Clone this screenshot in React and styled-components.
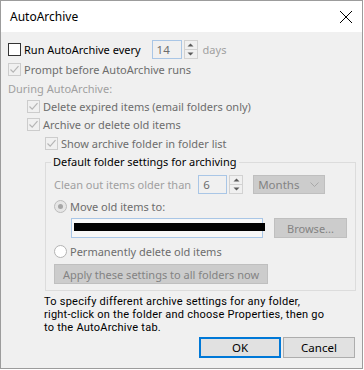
import React from "react";
import styled, { createGlobalStyle } from "styled-components";

const GlobalStyle = createGlobalStyle`
  html, body {
    margin: 0;
    padding: 0;
    background: #ffffff;
  }
  body {
    font-family: "Noto Sans", "Open Sans", sans-serif;
    font-size: 11px;
    color: #000;
  }
`;

const Dialog = styled.div`
  width: 363px;
  height: 369px;
  box-sizing: border-box;
  border: 1px solid #9c9c9c;
  background: #f0f0f0;
  display: flex;
  flex-direction: column;
`;

const TitleBar = styled.div`
  height: 31px;
  flex-shrink: 0;
  background: #fff;
  display: flex;
  align-items: center;
  justify-content: space-between;
  padding: 0 8px 0 9px;
  font-size: 12px;
`;

const CloseIcon = styled.svg`
  width: 14px;
  height: 14px;
  margin-right: 1px;
`;

const Body = styled.div`
  flex: 1;
  padding: 7px 0 0 7px;
  display: flex;
  flex-direction: column;
`;

const Row = styled.div`
  display: flex;
  align-items: center;
  height: ${p => p.h || 19}px;
  padding-left: ${p => p.indent || 0}px;
  margin-top: ${p => p.mt || 0}px;
  white-space: nowrap;
`;

const Label = styled.span`
  color: ${p => (p.tone === "dark" ? "#000" : p.tone === "light" ? "#a0a0a0" : "#6d6d6d")};
  margin-left: ${p => p.ml || 0}px;
`;

const Box = styled.span`
  width: 13px;
  height: 13px;
  box-sizing: border-box;
  border: 1px solid ${p => (p.disabled ? "#cccccc" : "#333333")};
  background: ${p => (p.disabled ? "#f0f0f0" : "#ffffff")};
  display: inline-flex;
  align-items: center;
  justify-content: center;
  flex-shrink: 0;
`;

const Radio = styled.span`
  width: 13px;
  height: 13px;
  box-sizing: border-box;
  border-radius: 50%;
  border: 1px solid ${p => (p.checked ? "#bcbcbc" : "#b3b3b3")};
  background: ${p => (p.checked ? "#e6e6e6" : "#ffffff")};
  display: inline-flex;
  align-items: center;
  justify-content: center;
  flex-shrink: 0;
  &::after {
    content: "";
    display: ${p => (p.checked ? "block" : "none")};
    width: 5px;
    height: 5px;
    border-radius: 50%;
    background: #a6a6a6;
  }
`;

const NumField = styled.span`
  width: ${p => p.w}px;
  height: 19px;
  box-sizing: border-box;
  border: 1px solid #a9c6e6;
  background: #f0f0f0;
  color: #6d6d6d;
  display: inline-flex;
  align-items: center;
  padding-left: 4px;
  font-size: 11.5px;
  margin-left: ${p => p.ml || 0}px;
`;

const Spinner = styled.span`
  width: 14px;
  height: 19px;
  box-sizing: border-box;
  border: 1px solid #d2d2d2;
  margin-left: 2px;
  display: inline-flex;
  flex-direction: column;
  & > span {
    flex: 1;
    display: flex;
    align-items: center;
    justify-content: center;
  }
  & > span + span {
    border-top: 1px solid #d2d2d2;
  }
`;

const Select = styled.span`
  width: 72px;
  height: 19px;
  box-sizing: border-box;
  border: 1px solid #bfbfbf;
  background: #cccccc;
  color: #838383;
  display: inline-flex;
  align-items: center;
  justify-content: space-between;
  padding: 0 5px 0 4px;
  font-size: 11.5px;
  margin-left: 10px;
`;

const PathField = styled.span`
  position: relative;
  width: 192px;
  height: 20px;
  box-sizing: border-box;
  border: 1px solid #a9c6e6;
  background: #f7f7f7;
  margin-left: 17px;
`;

const Redaction = styled.span`
  position: absolute;
  left: 2px;
  right: -3px;
  top: 4px;
  height: 8px;
  background: #000;
`;

const GrayButton = styled.span`
  width: ${p => p.w}px;
  height: 20px;
  box-sizing: border-box;
  border: 1px solid #bfbfbf;
  background: #cccccc;
  color: #838383;
  display: inline-flex;
  align-items: center;
  justify-content: center;
  margin-left: ${p => p.ml || 0}px;
`;

const Group = styled.fieldset`
  margin: 1px 0 0 37px;
  width: 311px;
  box-sizing: border-box;
  border: 1px solid #dcdcdc;
  padding: 1px 0 6px 8px;
  min-width: 0;
`;

const Legend = styled.legend`
  padding: 0 2px;
  margin-left: -3px;
  line-height: 16px;
  color: #000;
`;

const Note = styled.p`
  margin: 4px 0 0 36px;
  font-family: Roboto, "Noto Sans", sans-serif;
  font-size: 11px;
  letter-spacing: 0.24px;
  line-height: 13px;
  color: #000;
`;

const Footer = styled.div`
  display: flex;
  justify-content: flex-end;
  gap: 2px;
  padding-right: 7px;
  margin-top: 3px;
`;

const DialogButton = styled.span`
  width: ${p => p.w}px;
  height: 21px;
  box-sizing: border-box;
  border: ${p => (p.primary ? "2px solid #0078d7" : "1px solid #adadad")};
  background: #e1e1e1;
  display: inline-flex;
  align-items: center;
  justify-content: center;
  font-size: 11.5px;
`;

const Check = ({ disabled, checked }) => (
  <Box disabled={disabled}>
    {checked && (
      <svg width="11" height="11" viewBox="0 0 11 11">
        <path d="M1.5 5.5 L4.2 8.2 L9.5 2.2" fill="none" stroke="#b5b5b5" strokeWidth="1.2" />
      </svg>
    )}
  </Box>
);

const Arrows = () => (
  <Spinner>
    <span>
      <svg width="7" height="4" viewBox="0 0 7 4">
        <path d="M0.5 3.5 L3.5 0.5 L6.5 3.5 Z" fill="#5a5a5a" />
      </svg>
    </span>
    <span>
      <svg width="7" height="4" viewBox="0 0 7 4">
        <path d="M0.5 0.5 L3.5 3.5 L6.5 0.5 Z" fill="#5a5a5a" />
      </svg>
    </span>
  </Spinner>
);

export default function App() {
  return (
    <>
      <GlobalStyle />
      <Dialog>
        <TitleBar>
          <span>AutoArchive</span>
          <CloseIcon viewBox="0 0 14 14">
            <path d="M1 1 L13 13 M13 1 L1 13" stroke="#000" strokeWidth="1" />
          </CloseIcon>
        </TitleBar>
        <Body>
          <Row h={20}>
            <Check />
            <Label tone="dark" ml={3}>Run AutoArchive every</Label>
            <NumField w={30} ml={11}>14</NumField>
            <Arrows />
            <Label tone="light" ml={5}>days</Label>
          </Row>
          <Row h={21}>
            <Check disabled checked />
            <Label ml={3}>Prompt before AutoArchive runs</Label>
          </Row>
          <Row h={17}>
            <Label tone="light">During AutoArchive:</Label>
          </Row>
          <Row h={18} indent={19}>
            <Check disabled checked />
            <Label ml={3}>Delete expired items (email folders only)</Label>
          </Row>
          <Row h={19} indent={19}>
            <Check disabled checked />
            <Label ml={3}>Archive or delete old items</Label>
          </Row>
          <Row h={19} indent={37}>
            <Check disabled checked />
            <Label ml={3}>Show archive folder in folder list</Label>
          </Row>
          <Group>
            <Legend>Default folder settings for archiving</Legend>
            <Row h={20} mt={3}>
              <Label tone="light">Clean out items older than</Label>
              <NumField w={29} ml={7}>6</NumField>
              <Arrows />
              <Select>
                <span>Months</span>
                <svg width="9" height="5" viewBox="0 0 9 5">
                  <path d="M0.5 0.5 L4.5 4.5 L8.5 0.5" fill="none" stroke="#a8a8a8" strokeWidth="1" />
                </svg>
              </Select>
            </Row>
            <Row h={19} mt={3}>
              <Radio checked />
              <Label ml={3}>Move old items to:</Label>
            </Row>
            <Row h={20} mt={2}>
              <PathField>
                <Redaction />
              </PathField>
              <GrayButton w={73} ml={11}>Browse...</GrayButton>
            </Row>
            <Row h={19} mt={4}>
              <Radio />
              <Label ml={3}>Permanently delete old items</Label>
            </Row>
            <Row h={20} mt={3}>
              <GrayButton w={214}>Apply these settings to all folders now</GrayButton>
            </Row>
          </Group>
          <Note>
            To specify different archive settings for any folder,
            <br />
            right-click on the folder and choose Properties, then go
            <br />
            to the AutoArchive tab.
          </Note>
          <Footer>
            <DialogButton primary w={82}>OK</DialogButton>
            <DialogButton w={72}>Cancel</DialogButton>
          </Footer>
        </Body>
      </Dialog>
    </>
  );
}
